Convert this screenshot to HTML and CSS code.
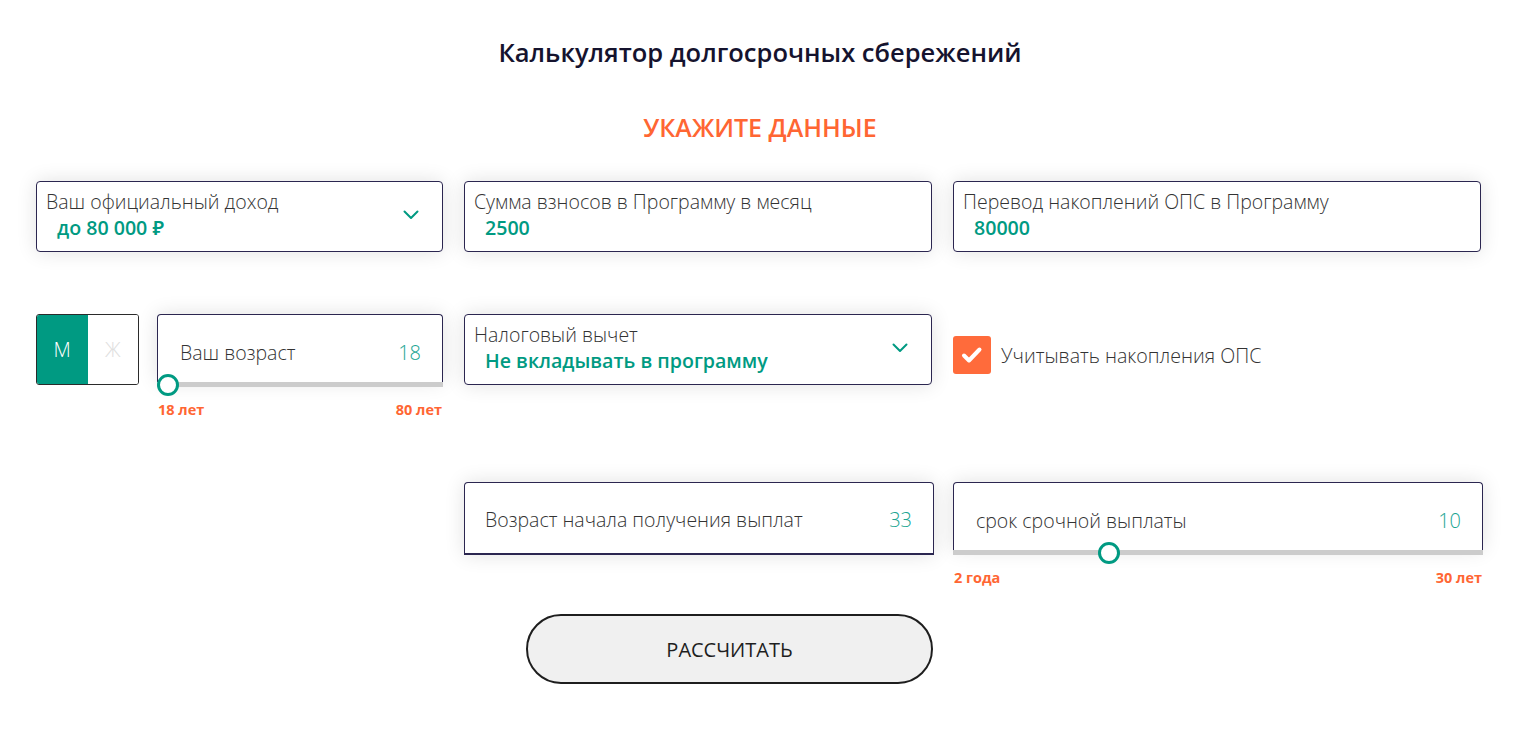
FILE: index.html
```html
<!DOCTYPE html>
<html lang="ru">
<head>
<meta charset="utf-8">
<title>Калькулятор долгосрочных сбережений</title>
<link rel="stylesheet" href="styles.css">
</head>
<body>
<main class="page">
  <h1 class="title">Калькулятор долгосрочных сбережений</h1>
  <h2 class="subtitle">УКАЖИТЕ ДАННЫЕ</h2>

  <section class="grid row-1">
    <div class="field field-select">
      <div class="field-text">
        <div class="field-label">Ваш официальный доход</div>
        <div class="field-value">до 80 000 ₽</div>
      </div>
      <svg class="chevron" width="16" height="10" viewBox="0 0 16 10"><polyline points="1.5,1.5 8,8 14.5,1.5" fill="none" stroke="#009a82" stroke-width="2" stroke-linecap="round" stroke-linejoin="round"/></svg>
    </div>
    <div class="field">
      <div class="field-text">
        <div class="field-label">Сумма взносов в Программу в месяц</div>
        <div class="field-value">2500</div>
      </div>
    </div>
    <div class="field field-narrow">
      <div class="field-text">
        <div class="field-label">Перевод накоплений ОПС в Программу</div>
        <div class="field-value">80000</div>
      </div>
    </div>
  </section>

  <section class="grid row-2">
    <div class="cell-age">
      <div class="gender">
        <div class="gender-opt gender-active">М</div>
        <div class="gender-opt">Ж</div>
      </div>
      <div class="slider slider-age">
        <div class="slider-box">
          <span class="slider-label">Ваш возраст</span>
          <span class="slider-num">18</span>
        </div>
        <div class="slider-track">
          <span class="thumb" style="left: 0%"></span>
        </div>
        <div class="slider-range"><span>18 лет</span><span>80 лет</span></div>
      </div>
    </div>
    <div class="field field-select">
      <div class="field-text">
        <div class="field-label">Налоговый вычет</div>
        <div class="field-value">Не вкладывать в программу</div>
      </div>
      <svg class="chevron" width="16" height="10" viewBox="0 0 16 10"><polyline points="1.5,1.5 8,8 14.5,1.5" fill="none" stroke="#009a82" stroke-width="2" stroke-linecap="round" stroke-linejoin="round"/></svg>
    </div>
    <label class="check">
      <span class="check-box">
        <svg width="38" height="38" viewBox="0 0 38 38"><polyline points="11,19.5 16,24.5 26.5,13.5" fill="none" stroke="#fff" stroke-width="4" stroke-linecap="round" stroke-linejoin="round"/></svg>
      </span>
      <span class="check-text">Учитывать накопления ОПС</span>
    </label>
  </section>

  <section class="grid row-3">
    <div class="spacer"></div>
    <div class="plain-box">
      <span class="slider-label">Возраст начала получения выплат</span>
      <span class="slider-num">33</span>
    </div>
    <div class="slider slider-term">
      <div class="slider-box">
        <span class="slider-label">срок срочной выплаты</span>
        <span class="slider-num">10</span>
      </div>
      <div class="slider-track">
        <span class="thumb" style="left: 28.6%"></span>
      </div>
      <div class="slider-range"><span>2 года</span><span>30 лет</span></div>
    </div>
  </section>

  <div class="actions">
    <button class="btn" type="button">РАССЧИТАТЬ</button>
  </div>
</main>
</body>
</html>
```

FILE: styles.css
```css
* { box-sizing: border-box; }

html, body {
  margin: 0;
  padding: 0;
  background: #ffffff;
}

body {
  font-family: "Open Sans", "Noto Sans", "Liberation Sans", sans-serif;
  color: #333;
}

.page {
  width: 1520px;
  padding-top: 34px;
}

.title {
  margin: 0;
  text-align: center;
  font-size: 25.5px;
  line-height: 36px;
  font-weight: 600;
  color: #15132e;
}

.subtitle {
  margin: 40px 0 0;
  text-align: center;
  font-size: 25px;
  line-height: 34px;
  font-weight: 600;
  color: #ff6633;
}

.grid {
  display: grid;
  grid-template-columns: 407px 468px 530px;
  column-gap: 21px;
  margin-left: 36px;
  align-items: start;
}

.row-1 { margin-top: 37px; }
.row-2 { margin-top: 62px; }
.row-3 { margin-top: 62px; }

.field {
  height: 71px;
  border: 1px solid #2b2650;
  border-radius: 4px;
  background: #fff;
  box-shadow: 0 0 20px rgba(0, 0, 0, 0.12);
  display: flex;
  align-items: center;
  padding: 0 23px 0 9px;
}

.field-narrow { width: 528px; }

.field-text {
  flex: 1;
  align-self: flex-start;
  padding-top: 7px;
}

.field-label {
  font-size: 19.5px;
  line-height: 26px;
  font-weight: 300;
  color: #333;
}

.field-value {
  padding-left: 11px;
  font-size: 19.6px;
  line-height: 25px;
  font-weight: 600;
  color: #009a82;
}

.chevron {
  display: block;
  margin-top: -3px;
}

/* row 2 */
.cell-age {
  display: flex;
  gap: 18px;
}

.gender {
  display: flex;
  width: 103px;
  height: 71px;
  border: 1px solid #2b2b2b;
  border-radius: 3px;
  overflow: hidden;
  flex-shrink: 0;
}

.gender-opt {
  flex: 1;
  display: flex;
  align-items: center;
  justify-content: center;
  font-size: 20px;
  font-weight: 300;
  color: #dedede;
  background: #fff;
}

.gender-active {
  background: #009a82;
  color: #fff;
}

.slider { position: relative; }
.slider-age { width: 288px; }
.slider-term { width: 530px; }

.slider-box {
  height: 68px;
  border: 1px solid #2b2650;
  border-bottom: none;
  border-radius: 4px 4px 0 0;
  background: #fff;
  box-shadow: 0 0 20px rgba(0, 0, 0, 0.12);
  display: flex;
  align-items: center;
  justify-content: space-between;
  padding: 8px 21px 0 22px;
}

.slider-label {
  font-size: 19.5px;
  font-weight: 300;
  color: #333;
}

.slider-num {
  font-size: 20px;
  font-weight: 300;
  color: #1aa592;
}

.slider-track {
  position: relative;
  height: 5px;
  background: #cccccc;
  margin-right: 11px;
  margin-left: 11px;
}

.slider-track::before {
  content: "";
  position: absolute;
  left: -11px;
  right: -11px;
  top: 0;
  bottom: 0;
  background: #cccccc;
}

.thumb {
  position: absolute;
  top: 50%;
  width: 22px;
  height: 22px;
  margin-left: -11px;
  margin-top: -11px;
  border: 3px solid #009a82;
  border-radius: 50%;
  background: #fff;
}

.slider-range {
  display: flex;
  justify-content: space-between;
  margin-top: 13px;
  padding: 0 1px;
  font-size: 14.5px;
  line-height: 20px;
  font-weight: 700;
  color: #ff6633;
}

.check {
  display: flex;
  align-items: center;
  gap: 10px;
  margin-top: 22px;
}

.check-box {
  width: 38px;
  height: 38px;
  border-radius: 3px;
  background: #ff6b3b;
  display: block;
}

.check-box svg { display: block; }

.check-text {
  font-size: 19.6px;
  font-weight: 300;
  color: #333;
}

/* row 3 */
.plain-box {
  width: 470px;
  height: 73px;
  border: 1px solid #2b2650;
  border-bottom-width: 2px;
  border-radius: 4px 4px 0 0;
  background: #fff;
  box-shadow: 0 0 20px rgba(0, 0, 0, 0.12);
  display: flex;
  align-items: center;
  justify-content: space-between;
  padding: 3px 21px 0 20px;
}

.actions {
  margin-top: 26px;
  padding-left: 526px;
}

.btn {
  width: 407px;
  height: 70px;
  border: 2px solid #1e1e1e;
  border-radius: 35px;
  background: #f0f0f0;
  font-family: "Open Sans", "Noto Sans", sans-serif;
  font-size: 20px;
  font-weight: 400;
  color: #1e1e1e;
  padding: 0;
}
```
